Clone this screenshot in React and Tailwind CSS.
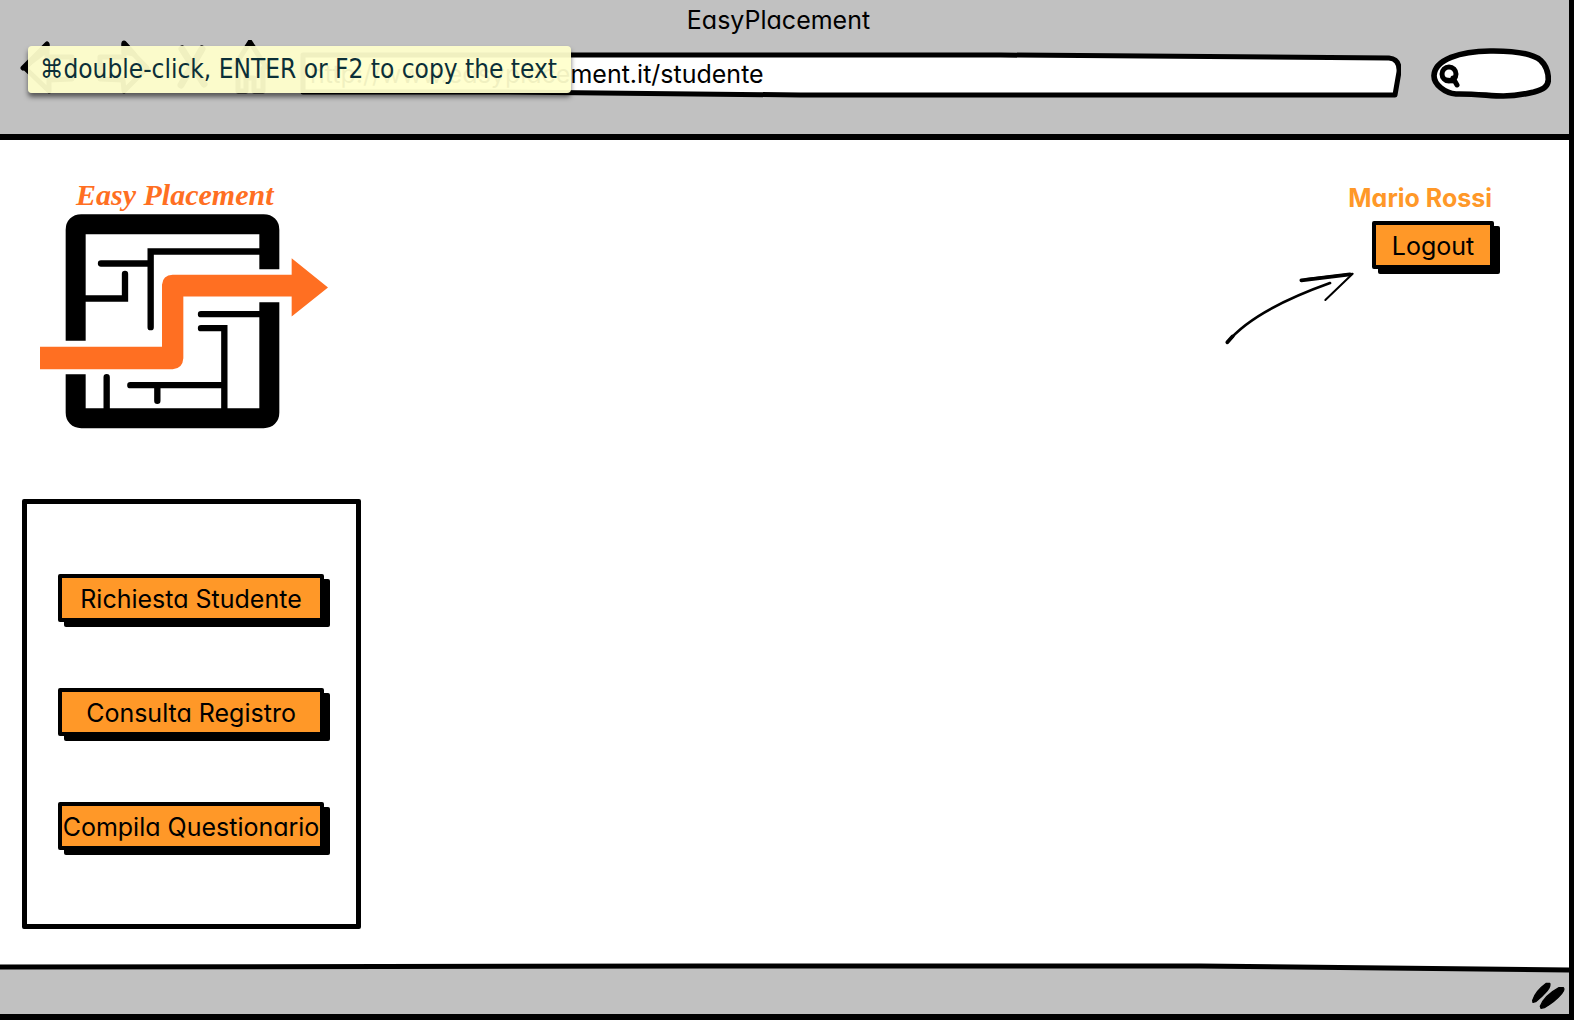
const stroke = { fill: 'none', stroke: '#000', strokeWidth: 5, strokeLinecap: 'round', strokeLinejoin: 'round' };

function NavButton({ label, width, children }) {
  return (
    <button type="button" aria-label={label} className="shrink-0">
      <svg width={width} height="56" viewBox={`0 0 ${width} 56`} {...stroke}>{children}</svg>
    </button>
  );
}

function SketchButton({ children, className = '' }) {
  return (
    <button
      type="button"
      className={`flex h-12 items-center justify-center whitespace-nowrap rounded-xs border-4 border-black bg-[#ff9828] pt-0.5 text-[25px] leading-8 text-black shadow-[6px_5px_0_0_#000] ${className}`}
    >
      {children}
    </button>
  );
}

function Header() {
  return (
    <header className="relative h-[140px] shrink-0 border-b-6 border-black bg-[#c1c1c1]">
      <h1 className="pt-1 pr-3 text-center text-[25px] leading-8">EasyPlacement</h1>
      <div className="flex items-start pr-[18px] pl-5">
        <nav className="flex gap-5 pt-1" aria-label="Browser">
          <NavButton label="Back" width={56}>
            <path d="M5 28 27 5 27 17 52 17 52 39 29 40 29 51Z" />
            <path d="M3 28 27 4 27 10Z" fill="#000" />
          </NavButton>
          <NavButton label="Forward" width={56}>
            <path d="M51 28 28 4 28 17 4 17 4 39 27 40 28 51Z" />
            <path d="M28 3 38 14 28 12Z" fill="#000" />
          </NavButton>
          <NavButton label="Stop" width={36}>
            <path d="M10 9 32 44M30 9 9 45" strokeWidth="7" />
          </NavButton>
          <NavButton label="Home" width={40}>
            <path d="M22 2 38 27 35 28 35 51 26 51 26 38 18 38 18 51 10 51 10 28 6 27Z" />
          </NavButton>
        </nav>
        <div className="flex min-w-0 flex-1 pt-4 pr-[30px] pl-8">
          <div className="relative flex h-[46px] min-w-0 flex-1">
            <svg className="absolute inset-0 h-full w-full" viewBox="0 0 1100 46" preserveAspectRatio="none" aria-hidden="true">
              <path d="M3 3H700L1088 6Q1099 7 1098 20L1094 43H500L200 40H3Z" fill="#fff" stroke="#000" strokeWidth="5" strokeLinejoin="round" />
            </svg>
            <input
              aria-label="Address"
              defaultValue="http://www.easyplacement.it/studente"
              className="relative min-w-0 flex-1 bg-transparent px-2.5 text-[25px] text-black outline-none"
            />
          </div>
        </div>
        <label className="relative mt-3 flex h-[51px] w-[120px] items-center pt-1 pl-2">
          <svg className="absolute inset-0 h-full w-full" viewBox="693 145 360 153" aria-hidden="true">
            <path d="M702 228C704 180 780 155 870 154C950 153 1000 164 1022 182C1038 197 1045 220 1045 240C1044 262 1030 268 1002 277C965 286 940 289 910 289C870 289 830 282 768 283C735 280 702 255 702 228Z" fill="#fff" stroke="#000" strokeWidth="17" />
          </svg>
          <svg className="relative" width="22" height="26" viewBox="0 0 22 26" {...stroke}>
            <circle cx="10" cy="11" r="7" />
            <path d="M7 17 15 18M14 15 18 22" />
          </svg>
          <input type="text" aria-label="Search" className="relative w-16 bg-transparent outline-none" />
        </label>
      </div>
      <div
        role="tooltip"
        className="absolute top-[46px] left-7 h-[47px] w-[543px] whitespace-nowrap rounded-sm bg-[#ffffcc]/94 pl-3 font-['DejaVu_Sans_Condensed','Noto_Sans','DejaVu_Sans',sans-serif] text-[26px] leading-[46px] text-[#0b2f38] shadow-[0_4px_5px_rgba(0,0,0,0.55)]"
      >
        ⌘double-click, ENTER or F2 to copy the text
      </div>
    </header>
  );
}

function Logo() {
  return (
    <div className="w-[290px]">
      <p className="pl-9 font-['Liberation_Serif',serif] text-[30px] leading-9 font-bold whitespace-nowrap text-[#ff6f22] italic">
        Easy Placement
      </p>
      <svg width="290" height="217" viewBox="60 130 870 650" fill="none" stroke="#000" strokeWidth="19" strokeLinecap="round" role="img" aria-label="Easy Placement">
        <path d="M167 513V180Q167 163 184 163H731Q748 163 748 180V298M748 397V728Q748 745 731 745H184Q167 745 167 728V613" strokeWidth="60" strokeLinecap="butt" />
        <path d="M243 281H392M392 472V245H725M195 386H315V312M543 433H725M543 475H613V725M331 646H613M412 650V693M260 622V725" />
        <path d="M60 531H426V345Q428 316 458 315H815V265L924 353L815 440V380H490V565Q488 596 458 598H60Z" fill="#ff6f22" stroke="none" />
      </svg>
    </div>
  );
}

export default function App() {
  return (
    <div className="flex min-h-screen flex-col border-r-5 border-b-6 border-black bg-white font-['Inter','Liberation_Sans',sans-serif] text-black [font-feature-settings:'cv11']">
      <Header />
      <main className="flex flex-1 items-start justify-between pr-[75px] pb-[33px] pl-[22px]">
        <div className="pt-[37px]">
          <div className="pl-[18px]">
            <Logo />
          </div>
          <nav aria-label="Menu" className="mt-[69px] flex h-[430px] w-[339px] flex-col gap-[66px] rounded-xs border-5 border-black pt-[70px] pl-[31px]">
            <SketchButton className="w-[266px]">Richiesta Studente</SketchButton>
            <SketchButton className="w-[266px]">Consulta Registro</SketchButton>
            <SketchButton className="w-[266px]">Compila Questionario</SketchButton>
          </nav>
        </div>
        <div className="flex flex-col items-end pt-10">
          <p className="pr-0.5 text-[25px] leading-9 font-bold text-[#ff9828]">Mario Rossi</p>
          <SketchButton className="mt-[5px] w-[122px]">Logout</SketchButton>
          <svg className="mt-[3px] mr-[137px]" width="132" height="76" viewBox="75 815 396 228" {...stroke} aria-hidden="true">
            <path d="M82 1026Q160 930 390 848" strokeWidth="8" />
            <path d="M82 1026 98 1008M304 840 450 822" strokeWidth="11" />
            <path d="M320 836 458 820 376 899" strokeWidth="6" />
          </svg>
        </div>
      </main>
      <footer className="h-[51px] shrink-0 bg-[#c1c1c1]">
        <div className="flex h-full flex-col items-end">
          <svg className="h-[10px] w-full" viewBox="0 0 1569 10" preserveAspectRatio="none" aria-hidden="true">
            <path d="M0 0H1569V6L1200 3 700 3 0 4Z" fill="#fff" />
            <path d="M0 4 700 3 1200 3 1569 7" fill="none" stroke="#000" strokeWidth="5" />
          </svg>
          <svg className="mt-2 mr-1" width="36" height="28" viewBox="0 0 108 84" aria-hidden="true" fill="#000" stroke="#000" strokeWidth="4" strokeLinejoin="round">
            <path d="M11 58Q20 30 52 7L62 7Q66 18 50 34Q38 48 20 62L12 64ZM34 76Q46 44 90 20L103 20Q108 26 98 38Q78 62 46 80L36 82Z" />
          </svg>
        </div>
      </footer>
    </div>
  );
}
